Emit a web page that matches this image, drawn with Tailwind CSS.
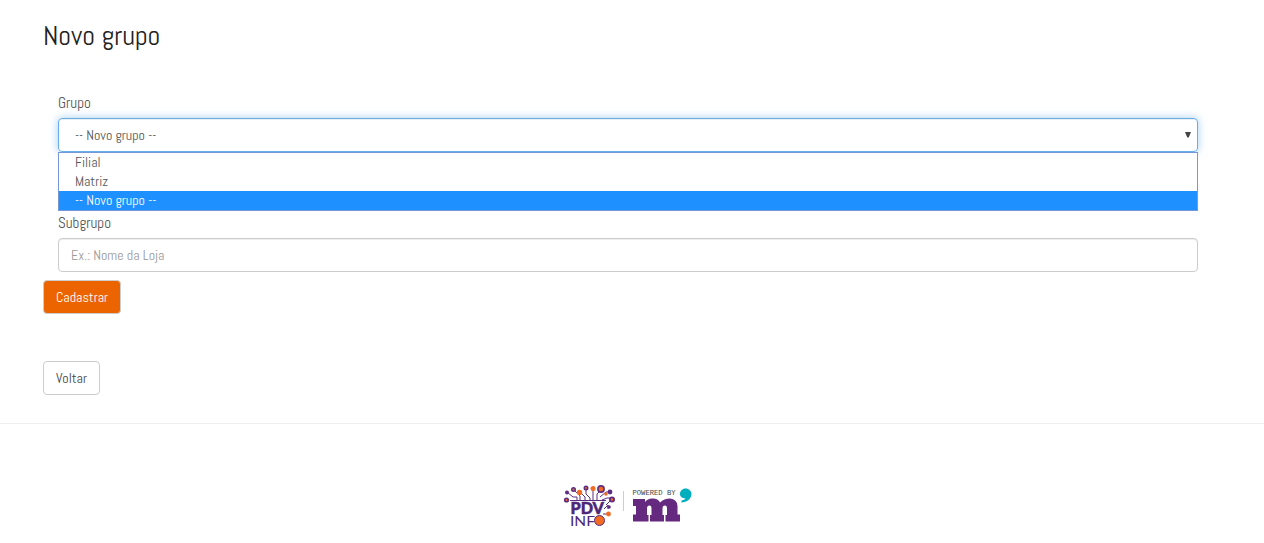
<!DOCTYPE html>
<html lang="pt-BR">
<head>
<meta charset="utf-8">
<title>Novo grupo</title>
<script src="https://cdn.jsdelivr.net/npm/@tailwindcss/browser@4"></script>
</head>
<body class="bg-white font-['Abel','Roboto',sans-serif] text-sm leading-5 text-[#555] h-[543px] overflow-hidden">
<main class="px-[43px] pt-5 h-[423px]">
  <h1 class="h-[31px] text-[28px] leading-[31px] text-[#222]">Novo grupo</h1>
  <form class="mt-[42px]">
    <div class="px-[15px] w-[1170px] relative">
      <label class="block h-5 mb-[5px] text-[15px]">Grupo</label>
      <div class="flex h-[34px] items-center justify-between rounded border border-[#66afe9] pl-4 pr-[6px] shadow-[inset_0_1px_1px_rgba(0,0,0,.075),0_0_8px_rgba(102,175,233,.6)]">
        <span>-- Novo grupo --</span>
        <svg class="w-[6px] h-[6px]" viewBox="0 0 6 6"><path d="M0 0H6L3.700 5.500H2.300Z" fill="#444"/></svg>
      </div>
      <ul class="absolute left-[15px] top-[59px] w-[1140px] h-[59px] border border-[#7598d6] bg-white leading-[19px]">
        <li class="h-[19px] pl-4">Filial</li>
        <li class="h-[19px] pl-4">Matriz</li>
        <li class="h-[19px] pl-4 bg-[#1e90ff] text-white">-- Novo grupo --</li>
      </ul>
      <label class="block h-5 mt-[61px] mb-[5px] text-[15px]">Subgrupo</label>
      <div class="flex h-[34px] items-center rounded border border-[#ccc] px-3 text-[#999] shadow-[inset_0_1px_1px_rgba(0,0,0,.075)]">Ex.: Nome da Loja</div>
    </div>
    <button type="button" class="mt-2 flex h-[34px] w-[78px] items-center rounded border border-[#ccc] bg-[#eb6400] pl-3 text-white">Cadastrar</button>
  </form>
  <button type="button" class="mt-[47px] flex h-[34px] w-[57px] items-center rounded border border-[#ccc] bg-white pl-3 text-[#444]">Voltar</button>
</main>
<footer class="flex justify-center border-t border-[#eee] pt-[56px]">
  <svg class="w-[140px] h-[50px]" viewBox="562 480 140 50">
    <g fill="none" stroke="#5c2d83" stroke-width="1">
      <path d="M567 492L573 497H577V501M573 489L580 496V501M581 493L585 497V501M586 489V494L590 498V501M593 489V501M601 490L597 494V501M600 497L606 492H611M602 500L607 498H612M606 505L612 499M604 509L608 505V509M603 514H608"/>
    </g>
    <g fill="#5c2d83"><circle cx="573.5" cy="489.5" r="2.5"/><circle cx="567" cy="492.500" r="2"/><circle cx="566.500" cy="500" r="2.600"/><circle cx="586" cy="488" r="2.500"/><circle cx="601" cy="489" r="3.900"/><circle cx="610" cy="492" r="2.400"/><circle cx="612" cy="499.500" r="3"/><circle cx="609" cy="507" r="1.800"/></g>
    <g fill="#f26b21"><circle cx="579.500" cy="492.500" r="2.700"/><circle cx="593" cy="488.500" r="2.500"/><circle cx="601" cy="489" r="2.300"/><circle cx="606" cy="494" r="1.800"/><circle cx="573.500" cy="489.500" r="1"/><circle cx="566.500" cy="500" r="1"/><circle cx="612" cy="499.500" r="1.200"/><circle cx="586" cy="488" r=".9"/><circle cx="608.500" cy="514" r="2.400"/></g>
    <path d="M570 500.500H606" stroke="#5c2d83"/>
    <g fill="#4e2878" font-family="Lato, sans-serif">
      <text x="570.500" y="514" font-size="16.500" font-weight="900" stroke="#4e2878" stroke-width=".5" textLength="33.500" lengthAdjust="spacingAndGlyphs">PDV</text>
      <text x="570" y="525.500" font-size="13" textLength="25" lengthAdjust="spacingAndGlyphs">INF</text>
    </g>
    <circle cx="599.500" cy="520.500" r="5" fill="#f26b21" stroke="#5c2d83"/>
    <path d="M623.500 491V511" stroke="#bcd9bd"/>
    <text x="632.500" y="495" font-family="Liberation Mono, monospace" font-size="7" fill="#444" textLength="43" lengthAdjust="spacingAndGlyphs">POWERED BY</text>
    <path fill="#65297f" d="M633 499H645V502Q648 498 653 498.500Q658 498.500 660 502.500Q664 498.500 670 498.500Q677 499 677.500 506V514.500H680V521.500H665.500V515H667V508.500Q667 505.500 665 505.500Q662.500 505.500 662.500 508.500V515H664V521.500H650V515H651.500V508.500Q651.500 505.500 649.500 505.500Q647 505.500 647 508.500V515H648.500V521.500H633V514.500H636V506H633Z"/>
    <path fill="#00aebd" d="M685.500 488.500C689 488.500 691.500 491 691.500 494C691.500 499 687 502 681.500 502.500V500.500Q685 500 685.500 498.500C682 498.500 680 496.500 680 493.800C680 491 682.500 488.500 685.500 488.500Z"/>
  </svg>
</footer>
</body>
</html>
